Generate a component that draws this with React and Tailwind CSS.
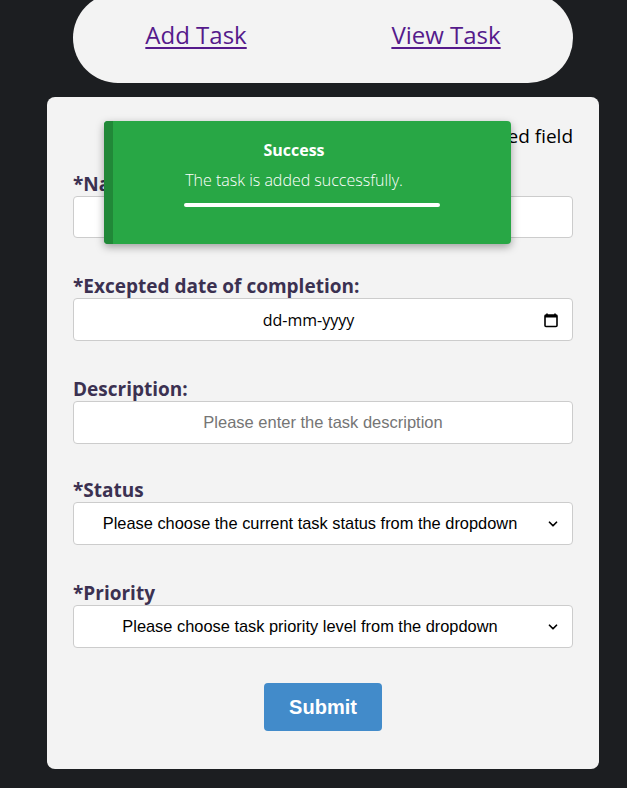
import { ChevronDown } from "lucide-react";

const FONT = { fontFamily: '"Open Sans", "Noto Sans", sans-serif' };

function Label({ children }) {
  return (
    <label className="block h-6 text-[19px] font-bold leading-6 text-[#3b3151]">
      {children}
    </label>
  );
}

function SelectField({ label, placeholder }) {
  return (
    <div className="mb-[36px]">
      <Label>{label}</Label>
      <div className="relative">
        <select
          defaultValue=""
          className="h-[43px] w-full appearance-none rounded border border-[#cccccc] bg-white pl-3 pr-[38px] text-center text-[16.4px] text-black outline-none"
          style={{ fontFamily: '"Liberation Sans", Arial, sans-serif', textAlignLast: "center" }}
        >
          <option value="" disabled>
            {placeholder}
          </option>
        </select>
        <ChevronDown
          className="pointer-events-none absolute right-[13px] top-1/2 h-[14px] w-[14px] -translate-y-1/2 text-black"
          strokeWidth={3}
        />
      </div>
    </div>
  );
}

export default function App() {
  return (
    <div className="min-h-[788px] bg-[#1c1e21] pb-5 pl-[19px]" style={FONT}>
      <nav className="mx-auto -mt-[7px] flex h-[90px] w-[500px] items-center justify-around rounded-full bg-[#f3f3f3]">
        <a href="#" className="pb-[7px] text-[24px] text-[#551a8b] underline underline-offset-[3px]">
          Add Task
        </a>
        <a href="#" className="pb-[7px] text-[24px] text-[#551a8b] underline underline-offset-[3px]">
          View Task
        </a>
      </nav>

      <div className="relative mx-auto mt-[14px] w-[552px] rounded-lg bg-[#f3f3f3] px-[26px] pb-[38px] pt-[28px]">
        <p className="h-[28px] -mt-[3px] text-right text-[19px] leading-[28px] text-black">
          * indicates required field
        </p>

        <div className="mt-[22px]">
          <div className="mb-[36px]">
            <Label>*Name:</Label>
            <input
              type="text"
              className="h-[42px] w-full rounded border border-[#cccccc] bg-white px-3 text-center text-base outline-none"
            />
          </div>

          <div className="mb-[36px]">
            <Label>*Excepted date of completion:</Label>
            <div className="flex h-[43px] w-full items-center rounded border border-[#cccccc] bg-white pl-3 pr-[13px]">
              <span className="flex-1 pr-[12px] text-center text-[16px] text-black">
                dd-mm-yyyy
              </span>
              <svg width="16" height="16" viewBox="0 0 16 16" className="text-black">
                <path d="M4 1.5v2M12 1.5v2" stroke="currentColor" strokeWidth="1.6" />
                <rect x="2" y="3" width="12" height="11.5" rx="1" fill="none" stroke="currentColor" strokeWidth="1.6" />
                <rect x="2" y="3" width="12" height="2.5" fill="currentColor" />
              </svg>
            </div>
          </div>

          <div className="mb-[34px]">
            <Label>Description:</Label>
            <input
              type="text"
              placeholder="Please enter the task description"
              className="h-[43px] w-full rounded border border-[#cccccc] bg-white px-3 text-center text-[16.5px] outline-none placeholder:text-[#757575]"
              style={{ fontFamily: '"Liberation Sans", Arial, sans-serif' }}
            />
          </div>

          <SelectField
            label="*Status"
            placeholder="Please choose the current task status from the dropdown"
          />
          <div className="-mb-[1px]">
            <SelectField
              label="*Priority"
              placeholder="Please choose task priority level from the dropdown"
            />
          </div>
        </div>

        <div className="-mt-[1px] flex justify-center">
          <button
            type="button"
            className="h-[48px] w-[118px] rounded bg-[#428bca] text-[20px] font-bold text-white"
            style={{ fontFamily: '"Liberation Sans", Arial, sans-serif' }}
          >
            Submit
          </button>
        </div>

        <div className="absolute left-[57px] top-[24px] flex h-[123px] w-[407px] overflow-hidden rounded bg-[#28a745] shadow-[0_3px_8px_rgba(0,0,0,0.35)]">
          <div className="w-[9px] bg-[#218838]" />
          <div className="flex flex-1 flex-col items-center pt-[16px]">
            <div className="pr-[36px] text-center text-white">
              <p className="text-[16px] font-bold leading-[26px]">Success</p>
              <p className="mt-[5px] text-[16px] font-light leading-[24px]">
                The task is added successfully.
              </p>
            </div>
            <div className="mt-[11px] h-[4px] w-[256px] rounded-full bg-white" />
          </div>
        </div>
      </div>
    </div>
  );
}
